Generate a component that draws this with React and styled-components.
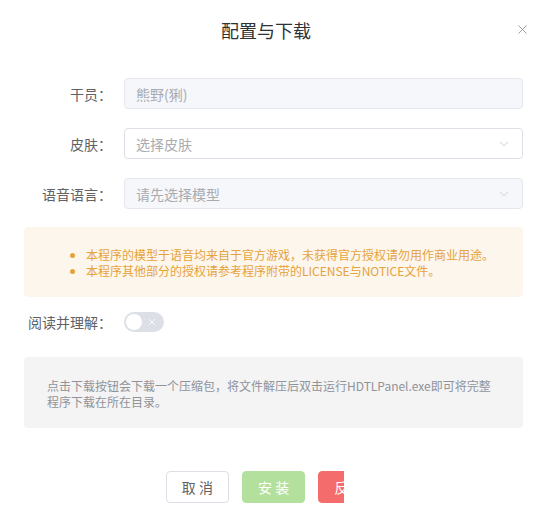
import styled, { createGlobalStyle } from "styled-components";
import { X, ChevronDown } from "lucide-react";

const GlobalStyle = createGlobalStyle`
  html, body {
    margin: 0;
    padding: 0;
    background: #ffffff;
  }
  body {
    font-family: "Noto Sans CJK SC", "Noto Sans", sans-serif;
    -webkit-font-smoothing: antialiased;
  }
`;

const Dialog = styled.div`
  width: 547px;
  box-sizing: border-box;
  padding: 0 24px 20px;
  display: flex;
  flex-direction: column;
`;

const Header = styled.div`
  position: relative;
  height: 60px;
  display: flex;
  align-items: center;
  justify-content: center;
  padding-right: 15px;
`;

const Title = styled.span`
  font-size: 18px;
  line-height: 24px;
  color: #303133;
`;

const CloseButton = styled.button`
  position: absolute;
  right: -7px;
  top: 21px;
  width: 16px;
  height: 16px;
  padding: 0;
  border: 0;
  background: none;
  color: #909399;
  display: flex;
  align-items: center;
  justify-content: center;
  cursor: pointer;
`;

const Form = styled.div`
  margin-top: 18px;
  display: flex;
  flex-direction: column;
  gap: 19px;
`;

const Row = styled.div`
  display: flex;
  align-items: center;
  height: ${(p) => p.$height || 31}px;
  margin-top: ${(p) => p.$top || 0}px;
`;

const Label = styled.label`
  width: 100px;
  box-sizing: border-box;
  padding-right: 12px;
  text-align: right;
  font-size: 14px;
  line-height: 20px;
  color: #606266;
  white-space: nowrap;
`;

const Field = styled.div`
  flex: 1;
  height: 100%;
  box-sizing: border-box;
  display: flex;
  align-items: center;
  justify-content: space-between;
  padding: 0 11px;
  border-radius: 4px;
  border: 1px solid ${(p) => (p.$disabled ? "#e4e7ed" : "#dcdfe6")};
  background: ${(p) => (p.$disabled ? "#f5f7fa" : "#ffffff")};
  font-size: 14px;
  color: #a8abb2;
`;

const Arrow = styled(ChevronDown)`
  color: #c0c4cc;
`;

const Alert = styled.div`
  margin-top: 18px;
  background: #fdf6ec;
  border-radius: 4px;
  padding: 20px 16px 18px;
`;

const AlertList = styled.ul`
  margin: 0;
  padding-left: 46px;
  color: #e6a23c;
  font-size: 12px;
  line-height: 16px;
`;

const Switch = styled.button`
  position: relative;
  width: 40px;
  height: 20px;
  padding: 0 7px 0 0;
  border: 0;
  border-radius: 10px;
  background: #dcdfe6;
  display: flex;
  align-items: center;
  justify-content: flex-end;
  box-sizing: border-box;
  color: #ffffff;
  cursor: pointer;
`;

const Knob = styled.span`
  position: absolute;
  left: 2px;
  top: 2px;
  width: 16px;
  height: 16px;
  border-radius: 50%;
  background: #ffffff;
`;

const Note = styled.div`
  margin-top: 19px;
  background: #f4f4f5;
  border-radius: 4px;
  padding: 21px 24px 18px 23px;
  font-size: 12px;
  line-height: 16px;
  color: #909399;
`;

const Footer = styled.div`
  margin-top: 43px;
  display: flex;
  justify-content: center;
  gap: 13px;
`;

const variants = {
  plain: { bg: "#ffffff", border: "#dcdfe6", color: "#606266" },
  success: { bg: "#b3e19d", border: "#b3e19d", color: "#ffffff" },
  danger: { bg: "#f56c6c", border: "#f56c6c", color: "#ffffff" },
};

const Button = styled.button`
  height: 32px;
  padding: 0 15px;
  box-sizing: border-box;
  border-radius: 4px;
  border: 1px solid ${(p) => variants[p.$kind].border};
  background: ${(p) => variants[p.$kind].bg};
  color: ${(p) => variants[p.$kind].color};
  font-family: inherit;
  font-size: 14px;
  line-height: 1;
  white-space: pre;
  flex-shrink: 0;
  cursor: pointer;
`;

/* the third button is cut off at the right in the source picture */
const Clip = styled.div`
  width: 63px;
  display: flex;
`;

const Cut = styled.div`
  width: 26px;
  overflow: hidden;
  display: flex;
`;

export default function App() {
  return (
    <>
      <GlobalStyle />
      <Dialog>
        <Header>
          <Title>配置与下载</Title>
          <CloseButton aria-label="close">
            <X size={15} strokeWidth={1.4} />
          </CloseButton>
        </Header>

        <Form>
          <Row>
            <Label>干员：</Label>
            <Field $disabled>熊野(猁)</Field>
          </Row>
          <Row>
            <Label>皮肤：</Label>
            <Field>
              选择皮肤
              <Arrow size={14} strokeWidth={1.4} />
            </Field>
          </Row>
          <Row>
            <Label>语音语言：</Label>
            <Field $disabled>
              请先选择模型
              <Arrow size={14} strokeWidth={1.4} />
            </Field>
          </Row>
        </Form>

        <Alert>
          <AlertList>
            <li>本程序的模型于语音均来自于官方游戏，未获得官方授权请勿用作商业用途。</li>
            <li>本程序其他部分的授权请参考程序附带的LICENSE与NOTICE文件。</li>
          </AlertList>
        </Alert>

        <Row $height={32} $top={9}>
          <Label>阅读并理解：</Label>
          <Switch aria-label="toggle">
            <Knob />
            <X size={10} strokeWidth={2} />
          </Switch>
        </Row>

        <Note>
          点击下载按钮会下载一个压缩包，将文件解压后双击运行HDTLPanel.exe即可将完整程序下载在所在目录。
        </Note>

        <Footer>
          <Button $kind="plain">取 消</Button>
          <Button $kind="success">安 装</Button>
          <Clip>
            <Cut>
              <Button $kind="danger">反 馈</Button>
            </Cut>
          </Clip>
        </Footer>
      </Dialog>
    </>
  );
}
